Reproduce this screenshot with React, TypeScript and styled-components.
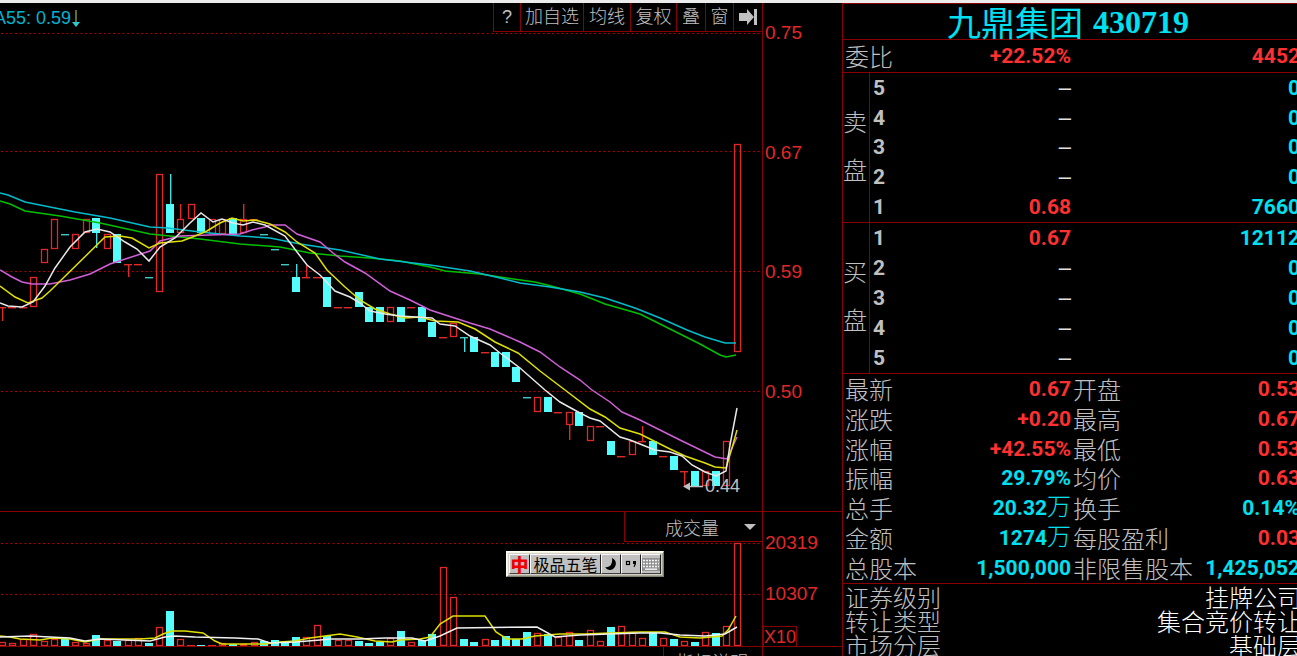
import React from 'react';
import styled, { createGlobalStyle } from 'styled-components';

const LINE = '#880000';
const RED = '#ff3030';
const CYAN = '#00e0f0';
const GRAY = '#c0c0c0';
const CANDLE_RED = '#e02828';
const CANDLE_CYAN = '#54fcfc';

const CJK = '"Noto Sans CJK SC", sans-serif';

const GlobalStyle = createGlobalStyle`
  * { box-sizing: border-box; }
  body {
    margin: 0;
    background: #000;
    overflow: hidden;
    font-family: "Liberation Sans", ${CJK};
    color: ${GRAY};
  }
`;

/* ---------- page frame ---------- */

const Page = styled.div`
  position: relative;
  height: 100vh;
  overflow: hidden;
  border-top: 3px solid #ececec;
`;

const Columns = styled.main`
  display: grid;
  grid-template-columns: minmax(0, 1fr) 80px 455px;
  align-items: stretch;
  height: 100%;
`;

const Column = styled.section`
  display: flex;
  flex-direction: column;
  min-width: 0;
`;

/* ---------- chart column ---------- */

const ChartHeader = styled.header`
  display: flex;
  justify-content: space-between;
  height: 30px;
`;

const Indicator = styled.span`
  display: flex;
  margin-left: -6px;
  font-size: 18px;
  line-height: 30px;
  color: #00b4d0;
  align-items: center;
`;

const Toolbar = styled.nav`
  display: flex;
  height: 29px;
  border-bottom: 1px solid ${LINE};
`;

const ToolButton = styled.button<{ $w: number }>`
  display: flex;
  align-items: center;
  justify-content: center;
  width: ${(p) => p.$w}px;
  padding: 0;
  border: 0;
  border-left: 1px solid ${LINE};
  background: #000;
  color: ${GRAY};
  font: 300 18px/28px "Liberation Sans", ${CJK};
  white-space: nowrap;
`;

const PriceArea = styled.div`
  position: relative;
  height: 478px;
`;

const Plot = styled.svg`
  display: block;
  width: 100%;
  height: 100%;
`;

const LowMark = styled.span`
  position: absolute;
  right: 22px;
  top: 443px;
  font-size: 18px;
  line-height: 20px;
`;

const VolumeHeader = styled.div`
  display: flex;
  justify-content: flex-end;
  height: 31px;
  border-top: 1px solid ${LINE};
`;

const SelectBox = styled.div`
  position: relative;
  width: 138px;
  height: 30px;
  border-left: 1px solid ${LINE};
  border-bottom: 1px solid ${LINE};
`;

const IndicatorSelect = styled.select`
  appearance: none;
  width: 100%;
  height: 29px;
  padding: 0 0 0 40px;
  border: 0;
  background: transparent;
  color: ${GRAY};
  font: 300 18px/28px ${CJK};
`;

const SelectArrow = styled.svg`
  position: absolute;
  right: 6px;
  top: 12px;
  pointer-events: none;
`;

const VolumeArea = styled.div`
  height: 104px;
`;

const Footer = styled.footer`
  display: flex;
  justify-content: flex-end;
  flex: 1;
  border-top: 1px solid ${LINE};
`;

const FooterButton = styled.button`
  width: 99px;
  height: 28px;
  padding: 0 0 0 12px;
  border: 0;
  border-left: 1px solid ${LINE};
  background: #000;
  color: ${GRAY};
  font: 300 18px/28px ${CJK};
  text-align: left;
`;

/* ---------- axis column ---------- */

const AxisColumn = styled(Column)`
  border-left: 1px solid ${LINE};
  color: ${CANDLE_RED};
  font-size: 19px;
  line-height: 20px;
`;

const PriceAxis = styled.div`
  display: flex;
  flex-direction: column;
  justify-content: space-between;
  height: 508px;
  padding: 20px 0 109px 2px;
`;

const VolumeAxis = styled.div`
  display: flex;
  flex-direction: column;
  align-items: flex-start;
  gap: 31px;
  height: 135px;
  padding: 21px 0 0 2px;
  border-top: 1px solid ${LINE};
`;

const UnitBox = styled.span`
  margin: -9px 0 0 -2px;
  height: 21px;
  border: 1px solid ${LINE};
  font-size: 18px;
`;

const AxisFoot = styled.div`
  flex: 1;
  border-top: 1px solid ${LINE};
`;

/* ---------- quote panel ---------- */

const Panel = styled.aside`
  border-left: 1px solid ${LINE};
  border-top: 1px solid ${LINE};
  overflow: hidden;
`;

const Title = styled.h1`
  display: flex;
  justify-content: center;
  align-items: center;
  gap: 10px;
  height: 36px;
  margin: 0;
  padding-right: 4px;
  border-bottom: 1px solid ${LINE};
  color: ${CYAN};
  font: 700 32px/34px "Liberation Serif", serif;
`;

const StockName = styled.span`
  font: 400 34px/32px ${CJK};
`;

const Sheet = styled.table<{ $h: number }>`
  width: calc(100% + 3px);
  height: ${(p) => p.$h}px;
  table-layout: fixed;
  border-spacing: 0;
  border-bottom: 1px solid ${LINE};

  td, th {
    padding: 0;
    overflow: visible;
    white-space: nowrap;
    line-height: 24px;
  }
`;

const SideHead = styled.th`
  width: 27px;
  border-right: 1px solid ${LINE};
  vertical-align: middle;
`;

const SideWord = styled.span`
  display: block;
  width: 24px;
  margin: 0 0 6px;
  font: 300 24px/48px ${CJK};
  white-space: normal;
  word-break: break-all;
`;

const Level = styled.th`
  width: 28px;
  text-align: left;
  font: 700 21px/24px Roboto, sans-serif;

  && { padding-left: 3px; }
`;

const Label = styled.th<{ $w: number }>`
  width: ${(p) => p.$w}px;
  text-align: left;
  font: 300 24px/24px ${CJK};

  && { padding-left: 2px; }
`;

const Value = styled.td<{ $c: string; $w?: number }>`
  width: ${(p) => (p.$w ? `${p.$w}px` : 'auto')};
  color: ${(p) => p.$c};
  text-align: right;
  font: 700 21px/24px Roboto, sans-serif;
`;

const Unit = styled.span`
  font: 300 24px/1px ${CJK};
`;

const Dash = styled.span`
  color: #e0e0e0;
  font: 400 22px/1px "Liberation Sans", sans-serif;
`;

const InfoList = styled.dl`
  margin: 0 -4px 0 0;
  padding-top: 1px;
`;

const InfoRow = styled.div`
  display: flex;
  justify-content: space-between;
  height: 24px;
  padding-left: 2px;
  font: 300 24px/24px ${CJK};

  dd { margin: 0; color: #fff; }
`;

/* ---------- input method bar ---------- */

const ImeBar = styled.div`
  position: absolute;
  left: 506px;
  top: 548px;
  display: flex;
  padding: 2px;
  background: #d4d0c8;
  border: 1px solid;
  border-color: #fffff0 #808070 #808070 #fffff0;
  box-shadow: inset 1px 1px 0 #f4f4e4, inset -1px -1px 0 #a8a898;
`;

const ImeButton = styled.button<{ $w: number }>`
  display: flex;
  align-items: center;
  justify-content: center;
  width: ${(p) => p.$w}px;
  height: 20px;
  padding: 0;
  border: 1px solid;
  border-color: #f8f8f8 #202020 #404040 #f8f8f8;
  background: #c0c0c0;
  color: #000;
  font: 400 16px/16px ${CJK};
  white-space: nowrap;
`;

const RedMark = styled.span`
  color: #f00000;
  font: 900 18px/16px ${CJK};
`;

/* ---------- chart data ---------- */

type Candle = { c: 'r' | 'c'; top: number; bottom: number; hi?: number; lo?: number };

// [colour, body top, body bottom, wick top, wick bottom]; a body without height is a flat session
const raw: [('r' | 'c'), number, number, number?, number?][] = [
  ['r', 307, 307, 307, 321], ['r', 307, 307], ['r', 307, 307], ['r', 277, 306],
  ['r', 249, 262], ['r', 219, 248], ['c', 234, 234], ['r', 234, 248],
  ['r', 219, 232], ['c', 218, 233, 218, 248], ['r', 234, 248], ['c', 234, 263],
  ['r', 264, 264, 264, 277], ['r', 264, 264], ['c', 277, 277], ['r', 174, 291],
  ['c', 204, 233, 174, 233], ['r', 219, 232, 204, 219], ['r', 204, 218], ['c', 218, 233],
  ['r', 219, 233], ['r', 219, 233], ['c', 218, 234], ['r', 219, 232, 204, 219],
  ['r', 219, 219], ['c', 234, 234], ['c', 249, 249], ['c', 264, 264],
  ['c', 277, 292, 264, 292], ['r', 277, 277, 264, 277], ['r', 277, 277], ['c', 277, 307],
  ['r', 307, 307], ['r', 307, 307], ['c', 292, 307], ['c', 307, 322],
  ['c', 307, 322], ['r', 307, 321], ['c', 307, 322], ['r', 307, 307],
  ['c', 307, 322], ['c', 322, 337], ['r', 337, 337], ['r', 323, 336],
  ['c', 337, 337, 337, 352], ['c', 337, 352], ['r', 352, 352], ['c', 352, 367],
  ['c', 352, 367], ['c', 367, 382], ['c', 397, 397], ['r', 397, 411],
  ['c', 397, 412], ['r', 412, 412], ['r', 412, 424, 424, 440], ['c', 412, 426],
  ['r', 426, 440], ['r', 426, 426], ['c', 441, 455], ['r', 456, 456],
  ['r', 441, 454], ['r', 441, 441, 426, 441], ['c', 441, 455], ['r', 456, 456],
  ['c', 456, 470], ['r', 471, 471, 471, 486], ['c', 471, 486], ['r', 471, 485],
  ['c', 471, 486], ['r', 441, 485], ['r', 144, 351],
];

const candles: Candle[] = raw.map(([c, top, bottom, hi, lo]) => ({ c, top, bottom, hi, lo }));

const volumeTops = [
  642, 643, 639, 634, 641, 639, 639, 642, 643, 635, 640, 641, 640, 638, 643, 627,
  611, 639, 645, 645, 645, 643, 644, 644, 642, 641, 640, 643, 637, 637, 625, 636,
  640, 640, 641, 643, 642, 638, 631, 642, 640, 634, 567, 597, 639, 642, 639, 640,
  636, 639, 632, 633, 634, 637, 632, 640, 630, 641, 627, 626, 632, 638, 632, 638,
  639, 641, 642, 632, 633, 626, 543,
];

const xOf = (i: number) => Math.floor(2 + i * 10.5);

const averages = [
  { color: '#00c000', points: '0,201 10,204 25,211 60,216 100,223 150,234 200,239 240,244 280,247 310,253 340,256 370,258 400,261 430,267 445,271 480,274 500,277 535,282 555,287 580,294 605,304 640,314 670,329 700,344 720,355 726,357 736,355' },
  { color: '#00bccc', points: '0,193 8,195 25,202 75,212 110,218 150,227 168,228 200,232 240,236 270,238 300,244 340,250 380,259 430,265 470,271 500,278 520,283 550,287 580,292 605,298 635,308 660,318 687,330 705,337 725,343 736,343' },
  { color: '#d060d8', points: '0,270 12,277 22,282 32,284 50,284 70,280 90,274 110,264 150,251 160,241 180,236 240,234 252,230 265,227 270,225 285,225 297,234 320,242 333,253 345,262 365,273 390,291 410,300 430,310 470,323 490,329 520,342 540,352 560,367 580,380 592,390 610,402 622,412 640,420 680,440 715,457 727,459 732,448 737,437' },
  { color: '#e0e000', points: '0,286 15,297 28,303 42,298 50,291 105,237 120,236 132,238 149,248 160,243 182,241 195,236 207,231 220,223 232,218 243,221 255,220 270,224 285,232 297,242 315,253 327,270 345,287 360,300 375,309 390,314 405,318 420,317 435,321 458,322 475,329 495,342 518,353 540,371 565,390 590,409 605,417 620,428 640,434 670,449 685,456 705,463 715,467 726,468 732,448 737,430' },
  { color: '#e8e8e8', points: '0,303 8,306 22,307 33,302 45,286 55,268 70,247 85,232 97,229 110,232 125,242 137,249 149,261 160,247 175,238 190,223 201,213 213,222 222,219 233,223 243,225 253,222 265,225 285,236 297,252 307,265 320,275 335,291 350,297 360,303 370,311 385,314 400,316 432,318 440,324 455,326 470,336 490,345 500,353 520,368 545,390 560,402 580,413 590,418 600,421 620,437 630,440 645,446 655,450 670,452 682,456 692,465 705,472 716,476 726,471 730,445 737,408' },
];

const volumeAverages = [
  { color: '#e0e000', points: '0,636 10,637 20,639 40,640 52,638 70,639 85,642 100,639 140,639 155,638 163,634 172,631 185,631 203,633 215,641 222,644 265,644 280,642 295,641 310,638 325,636 340,634 357,637 375,641 392,642 400,640 420,639 430,637 440,624 453,616 485,616 496,632 507,639 522,639 535,636 560,634 585,634 610,633 640,632 665,632 680,637 700,638 722,636 728,630 736,616' },
  { color: '#f0f0f0', points: '0,637 30,636 70,638 85,641 100,639 150,641 165,637 175,636 195,637 235,638 258,639 270,643 295,642 320,640 330,639 360,639 385,638 412,638 425,641 440,636 457,628 537,627 555,637 580,635 640,633 660,633 680,635 705,636 725,634 737,627' },
];

const GridLines = ({ rows }: { rows: number[] }) => (
  <>
    {rows.map((y) => (
      <line key={y} x1="1" x2="762" y1={y + 0.5} y2={y + 0.5} stroke="#b00000" strokeWidth="1" strokeDasharray="2 2.67" />
    ))}
  </>
);

const Bar = ({ x, c, top, bottom }: { x: number; c: 'r' | 'c'; top: number; bottom: number }) => {
  if (bottom - top < 1) {
    return <rect x={x - 4} y={top} width="8" height="1.4" fill={c === 'r' ? CANDLE_RED : '#40c8c8'} />;
  }
  return c === 'c' ? (
    <rect x={x - 4} y={top} width="8" height={bottom - top} fill={CANDLE_CYAN} />
  ) : (
    <rect x={x - 2.5} y={top + 0.5} width="6" height={Math.max(bottom - top, 1)} fill="none" stroke={CANDLE_RED} strokeWidth="1.3" />
  );
};

const PricePlot = () => (
  <Plot viewBox="0 33 762 478" preserveAspectRatio="none" role="img" aria-label="日K线">
    <GridLines rows={[33, 151, 271, 391]} />
    {candles.map((k, i) => {
      const x = xOf(i);
      return (
        <g key={i}>
          {k.hi !== undefined && (
            <rect x={x} y={k.hi} width="1.4" height={(k.lo ?? k.hi) - k.hi} fill={k.c === 'r' ? CANDLE_RED : '#48dcdc'} />
          )}
          <Bar x={x} c={k.c} top={k.top} bottom={k.bottom} />
        </g>
      );
    })}
    {averages.map((a) => (
      <polyline key={a.color} points={a.points} fill="none" stroke={a.color} strokeWidth="1.5" />
    ))}
    <path d="M683 486.5 L690 482.5 V485.8 H703 V487.2 H690 V490.5 Z" fill={GRAY} />
  </Plot>
);

const VolumePlot = () => (
  <Plot viewBox="0 542 762 104" preserveAspectRatio="none" role="img" aria-label="成交量">
    <GridLines rows={[543, 594]} />
    {volumeTops.map((top, i) => (
      <Bar key={i} x={xOf(i)} c={candles[i].c} top={top} bottom={candles[i].c === 'c' ? 646 : 645} />
    ))}
    {volumeAverages.map((a) => (
      <polyline key={a.color} points={a.points} fill="none" stroke={a.color} strokeWidth="1.5" />
    ))}
  </Plot>
);

/* ---------- quote data ---------- */

type Order = [string, string | null, string];

const sells: Order[] = [
  ['5', null, '0'], ['4', null, '0'], ['3', null, '0'], ['2', null, '0'], ['1', '0.68', '7660'],
];
const buys: Order[] = [
  ['1', '0.67', '12112'], ['2', null, '0'], ['3', null, '0'], ['4', null, '0'], ['5', null, '0'],
];

const stats: [string, string, string, string, string, string, string?][] = [
  ['最新', '0.67', RED, '开盘', '0.53', RED],
  ['涨跌', '+0.20', RED, '最高', '0.67', RED],
  ['涨幅', '+42.55%', RED, '最低', '0.53', RED],
  ['振幅', '29.79%', CYAN, '均价', '0.63', RED],
  ['总手', '20.32', CYAN, '换手', '0.14%', CYAN, '万'],
  ['金额', '1274', CYAN, '每股盈利', '0.03', RED, '万'],
  ['总股本', '1,500,000', CYAN, '非限售股本', '1,425,052', CYAN],
];

const info: [string, string][] = [
  ['证券级别', '挂牌公司'],
  ['转让类型', '集合竞价转让'],
  ['市场分层', '基础层'],
];

const OrderBook = ({ side, orders, height }: { side: string; orders: Order[]; height: number }) => (
  <Sheet $h={height}>
    <tbody>
      {orders.map(([level, price, amount], i) => (
        <tr key={level}>
          {i === 0 && (
            <SideHead rowSpan={5} scope="rowgroup">
              <SideWord>{side}</SideWord>
            </SideHead>
          )}
          <Level scope="row">{level}</Level>
          <Value $c={RED} $w={173}>{price ?? <Dash>–</Dash>}</Value>
          <Value $c={CYAN}>{amount}</Value>
        </tr>
      ))}
    </tbody>
  </Sheet>
);

export default function App() {
  return (
    <Page>
      <GlobalStyle />
      <Columns>
        <Column>
          <ChartHeader>
            <Indicator>
              A55: 0.59
              <svg width="10" height="20" viewBox="0 0 10 20" aria-hidden="true">
                <path d="M5 2V15" stroke="#7a8a30" strokeWidth="1.6" />
                <path d="M1 14H9L5 19Z" fill="#30c8d0" />
              </svg>
            </Indicator>
            <Toolbar>
              <ToolButton $w={27}>?</ToolButton>
              <ToolButton $w={63}>加自选</ToolButton>
              <ToolButton $w={47}>均线</ToolButton>
              <ToolButton $w={46}>复权</ToolButton>
              <ToolButton $w={29}>叠</ToolButton>
              <ToolButton $w={28}>窗</ToolButton>
              <ToolButton $w={29} aria-label="最后">
                <svg width="20" height="18" viewBox="0 0 20 18" aria-hidden="true">
                  <path d="M1 5H9V1L16 9L9 17V13H1Z M16 1H19V17H16Z" fill={GRAY} />
                </svg>
              </ToolButton>
            </Toolbar>
          </ChartHeader>
          <PriceArea>
            <PricePlot />
            <LowMark>0.44</LowMark>
          </PriceArea>
          <VolumeHeader>
            <SelectBox>
              <IndicatorSelect aria-label="指标" defaultValue="vol">
                <option value="vol">成交量</option>
              </IndicatorSelect>
              <SelectArrow width="12" height="7" viewBox="0 0 12 7" aria-hidden="true">
                <path d="M0 0H12L6 6Z" fill={GRAY} />
              </SelectArrow>
            </SelectBox>
          </VolumeHeader>
          <VolumeArea>
            <VolumePlot />
          </VolumeArea>
          <Footer>
            <FooterButton>指标说明</FooterButton>
          </Footer>
        </Column>

        <AxisColumn>
          <PriceAxis>
            <span>0.75</span>
            <span>0.67</span>
            <span>0.59</span>
            <span>0.50</span>
          </PriceAxis>
          <VolumeAxis>
            <span>20319</span>
            <span>10307</span>
            <UnitBox>X10</UnitBox>
          </VolumeAxis>
          <AxisFoot />
        </AxisColumn>

        <Panel>
          <Title>
            <StockName>九鼎集团</StockName>
            <span>430719</span>
          </Title>
          <Sheet $h={33}>
            <tbody>
              <tr>
                <Label $w={78} scope="row">委比</Label>
                <Value $c={RED} $w={150}>+22.52%</Value>
                <Value $c={RED}>4452</Value>
              </tr>
            </tbody>
          </Sheet>
          <OrderBook side="卖盘" orders={sells} height={150} />
          <OrderBook side="买盘" orders={buys} height={151} />
          <Sheet $h={210}>
            <tbody>
              {stats.map(([a, av, ac, b, bv, bc, unit]) => (
                <tr key={a}>
                  <Label $w={78} scope="row">{a}</Label>
                  <Value $c={ac} $w={150}>
                    {av}
                    {unit && <Unit>{unit}</Unit>}
                  </Value>
                  <Label $w={124} scope="row">{b}</Label>
                  <Value $c={bc}>{bv}</Value>
                </tr>
              ))}
            </tbody>
          </Sheet>
          <InfoList>
            {info.map(([name, value]) => (
              <InfoRow key={name}>
                <dt>{name}</dt>
                <dd>{value}</dd>
              </InfoRow>
            ))}
          </InfoList>
        </Panel>
      </Columns>

      <ImeBar>
        <ImeButton $w={21}>
          <RedMark>中</RedMark>
        </ImeButton>
        <ImeButton $w={71}>极品五笔</ImeButton>
        <ImeButton $w={20} aria-label="半角">
          <svg width="14" height="14" viewBox="0 0 14 14" aria-hidden="true">
            <path d="M8 1C13 3 13 9 9 12C6 14 3 13 1 10C5 11 9 8 8 1Z" fill="#000" />
          </svg>
        </ImeButton>
        <ImeButton $w={20} aria-label="标点">
          <svg width="14" height="10" viewBox="0 0 14 10" aria-hidden="true">
            <rect x="2.5" y="2.5" width="3" height="3" fill="none" stroke="#000" strokeWidth="1.2" />
            <path d="M9 2H12V5L10.5 8H9.5L10.5 5H9Z" fill="#000" />
          </svg>
        </ImeButton>
        <ImeButton $w={20} aria-label="软键盘">
          <svg width="18" height="13" viewBox="0 0 18 13" aria-hidden="true">
            <rect x="0" y="0" width="18" height="13" fill="#909090" />
            <path d="M1 2.5H17M1 5.5H17M1 8.5H17" stroke="#f4f4f4" strokeWidth="1.6" strokeDasharray="2 1" />
            <path d="M3 11.2H15" stroke="#f4f4f4" strokeWidth="1.4" />
          </svg>
        </ImeButton>
      </ImeBar>
    </Page>
  );
}
